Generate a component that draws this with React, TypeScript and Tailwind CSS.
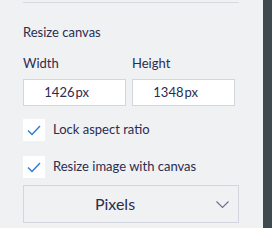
import React from 'react';

const CheckRow: React.FC<{ label: string }> = ({ label }) => (
  <div className="flex items-center h-[22px]">
    <div className="w-[22px] h-[22px] bg-white flex items-center justify-center">
      <svg width="14" height="11" viewBox="0 0 14 11" fill="none">
        <path d="M1 5.5 L5 9.5 L13 1" stroke="#2b7cd3" strokeWidth="1.4" />
      </svg>
    </div>
    <span className="ml-[8px] text-[13px] text-[#2b2c4f]">{label}</span>
  </div>
);

const SizeInput: React.FC<{ value: string }> = ({ value }) => (
  <div className="w-[103px] h-[27px] bg-white border border-[#d3d6de] flex items-center text-[13px] text-[#2b2c4f]">
    <span className="w-1/2 text-right">{value}</span>
    <span className="pl-[1px]">px</span>
  </div>
);

export default function App() {
  return (
    <div className="w-[272px] h-[228px] flex overflow-hidden" style={{ fontFamily: 'Lato, sans-serif' }}>
      <div className="flex-1 bg-[#f0f1f3] pl-[23px] pr-[24px]">
        <div className="mt-[2px] h-px bg-[#d8dadf]" />
        <div className="mt-[20px] text-[13px] leading-[18px] text-[#2b2c4f]">Resize canvas</div>
        <div className="mt-[13px] flex text-[13px] leading-[18px] text-[#2b2c4f]">
          <span className="w-[109px]">Width</span>
          <span>Height</span>
        </div>
        <div className="mt-[7px] flex gap-[6px]">
          <SizeInput value="1426" />
          <SizeInput value="1348" />
        </div>
        <div className="mt-[13px]">
          <CheckRow label="Lock aspect ratio" />
        </div>
        <div className="mt-[15px]">
          <CheckRow label="Resize image with canvas" />
        </div>
        <div className="mt-[7px] h-[38px] border border-[#d3d6de] flex items-center relative">
          <span className="flex-1 text-center pr-[32px] text-[16px] text-[#2b2c4f]">Pixels</span>
          <svg className="absolute right-[9px] top-[15px]" width="13" height="8" viewBox="0 0 13 8" fill="none">
            <path d="M0.5 0.5 L6.5 6.5 L12.5 0.5" stroke="#6e6c8c" strokeWidth="1.1" />
          </svg>
        </div>
      </div>
      <div className="w-[9px] bg-[#3e4950]" />
    </div>
  );
}
